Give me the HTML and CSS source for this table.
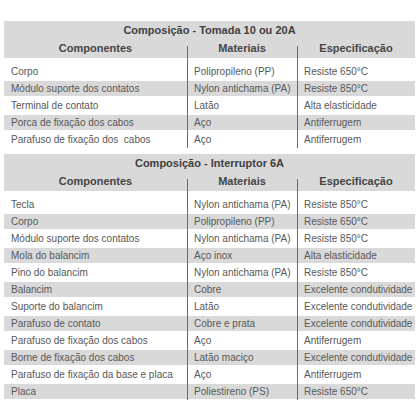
FILE: index.html
```html
<!DOCTYPE html>
<html lang="pt">
<head>
<meta charset="utf-8">
<link rel="stylesheet" href="styles.css">
</head>
<body>
<div class="page">
  <table class="spec first">
    <colgroup><col class="c1"><col class="c2"><col class="c3"></colgroup>
    <thead>
      <tr class="title"><th colspan="3">Composição - Tomada 10 ou 20A</th></tr>
      <tr class="head"><th>Componentes</th><th class="sep">Materiais</th><th class="sep">Especificação</th></tr>
    </thead>
    <tbody>
      <tr><td>Corpo</td><td class="sep">Polipropileno (PP)</td><td class="sep">Resiste 650°C</td></tr>
      <tr class="alt"><td>Módulo suporte dos contatos</td><td class="sep">Nylon antichama (PA)</td><td class="sep">Resiste 850°C</td></tr>
      <tr><td>Terminal de contato</td><td class="sep">Latão</td><td class="sep">Alta elasticidade</td></tr>
      <tr class="alt"><td>Porca de fixação dos cabos</td><td class="sep">Aço</td><td class="sep">Antiferrugem</td></tr>
      <tr class="last"><td>Parafuso de fixação dos&nbsp; cabos</td><td class="sep">Aço</td><td class="sep">Antiferrugem</td></tr>
    </tbody>
  </table>

  <table class="spec second">
    <colgroup><col class="c1"><col class="c2"><col class="c3"></colgroup>
    <thead>
      <tr class="title"><th colspan="3">Composição - Interruptor 6A</th></tr>
      <tr class="head"><th>Componentes</th><th class="sep">Materiais</th><th class="sep">Especificação</th></tr>
    </thead>
    <tbody>
      <tr><td>Tecla</td><td class="sep">Nylon antichama (PA)</td><td class="sep">Resiste 850°C</td></tr>
      <tr class="alt"><td>Corpo</td><td class="sep">Polipropileno (PP)</td><td class="sep">Resiste 650°C</td></tr>
      <tr><td>Módulo suporte dos contatos</td><td class="sep">Nylon antichama (PA)</td><td class="sep">Resiste 850°C</td></tr>
      <tr class="alt"><td>Mola do balancim</td><td class="sep">Aço inox</td><td class="sep">Alta elasticidade</td></tr>
      <tr><td>Pino do balancim</td><td class="sep">Nylon antichama (PA)</td><td class="sep">Resiste 850°C</td></tr>
      <tr class="alt"><td>Balancim</td><td class="sep">Cobre</td><td class="sep">Excelente condutividade</td></tr>
      <tr><td>Suporte do balancim</td><td class="sep">Latão</td><td class="sep">Excelente condutividade</td></tr>
      <tr class="alt"><td>Parafuso de contato</td><td class="sep">Cobre e prata</td><td class="sep">Excelente condutividade</td></tr>
      <tr><td>Parafuso de fixação dos cabos</td><td class="sep">Aço</td><td class="sep">Antiferrugem</td></tr>
      <tr class="alt"><td>Borne de fixação dos cabos</td><td class="sep">Latão maciço</td><td class="sep">Excelente condutividade</td></tr>
      <tr><td>Parafuso de fixação da base e placa</td><td class="sep">Aço</td><td class="sep">Antiferrugem</td></tr>
      <tr class="alt last"><td>Placa</td><td class="sep">Poliestireno (PS)</td><td class="sep">Resiste 650°C</td></tr>
    </tbody>
  </table>
</div>
</body>
</html>
```

FILE: styles.css
```css
html, body {
  margin: 0;
  padding: 0;
  background: #ffffff;
}

.page {
  padding: 21px 5px 0 4px;
  font-family: "Liberation Sans", Arial, sans-serif;
}

.spec {
  width: 411px;
  table-layout: fixed;
  border-collapse: separate;
  border-spacing: 0;
}

.spec.second {
  margin-top: 6px;
}

.c1 { width: 183px; }
.c2 { width: 110px; }
.c3 { width: 118px; }

.spec th,
.spec td {
  padding: 0;
  white-space: nowrap;
  overflow: hidden;
}

.title th {
  height: 18px;
  line-height: 18px;
  background: #d9d9d9;
  color: #3f3f3f;
  font-size: 11px;
  font-weight: bold;
  text-align: center;
}

.head th {
  height: 24px;
  line-height: 19px;
  vertical-align: top;
  color: #454545;
  font-size: 11px;
  font-weight: bold;
  text-align: center;
  background: linear-gradient(#d9d9d9, #d9d9d9) 0 0 / 100% 19px no-repeat;
}

.head th.sep {
  background:
    linear-gradient(#6a6a6a, #6a6a6a) 0 7px / 1px 100% no-repeat,
    linear-gradient(#d9d9d9, #d9d9d9) 0 0 / 100% 19px no-repeat;
}

.spec td {
  height: 17px;
  line-height: 17px;
  font-size: 10px;
  color: #585858;
  padding-left: 7px;
}

.spec td.sep {
  border-left: 1px solid #6a6a6a;
  padding-left: 6px;
}

.spec tr.alt td {
  background: linear-gradient(#d9d9d9, #d9d9d9) 0 1px / 100% 15px no-repeat;
}
```
